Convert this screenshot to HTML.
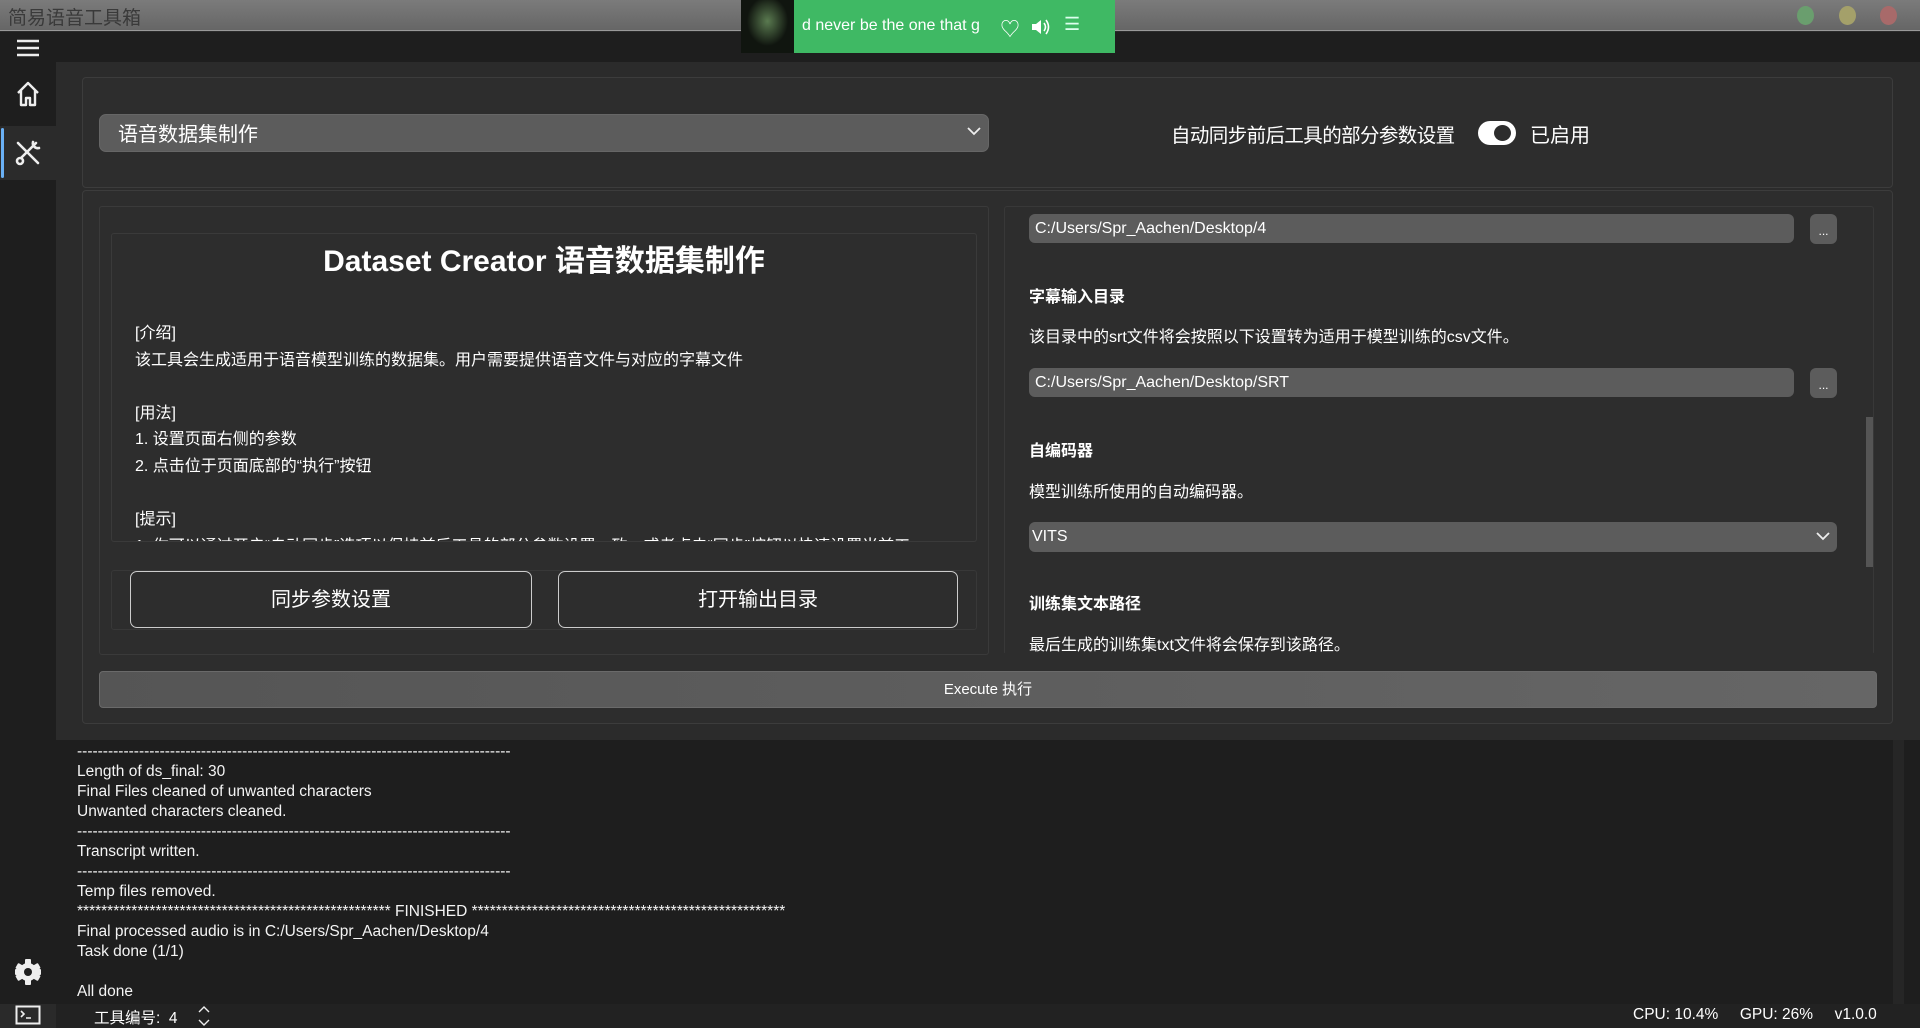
<!DOCTYPE html>
<html><head><meta charset="utf-8">
<style>
*{margin:0;padding:0;box-sizing:border-box}
body{width:1920px;height:1028px;overflow:hidden;background:#2b2b2b;font-family:"Liberation Sans","Noto Sans CJK SC",sans-serif;color:#fff;position:relative}
.a{position:absolute}
.t{white-space:nowrap}
</style></head><body>
<!-- title bar -->
<div class="a" style="left:0;top:0;width:1920px;height:31px;background:linear-gradient(#7b7b7b,#666);border-bottom:1px solid #999"></div>
<div class="a t" style="left:8px;top:3px;font-size:19px;color:#3a3a3a">简易语音工具箱</div>
<div class="a" style="left:1797px;top:6px;width:17px;height:19px;border-radius:50%;background:#6a9e6e"></div>
<div class="a" style="left:1839px;top:6px;width:17px;height:19px;border-radius:50%;background:#a4a06a"></div>
<div class="a" style="left:1880px;top:6px;width:17px;height:19px;border-radius:50%;background:#a86a6a"></div>
<!-- top dark strip + sidebar -->
<div class="a" style="left:0;top:32px;width:1920px;height:30px;background:#1e1e1e"></div>
<div class="a" style="left:0;top:32px;width:56px;height:996px;background:#1e1e1e"></div>
<!-- green player -->
<div class="a" style="left:741px;top:0;width:374px;height:53px;background:#3fb964"></div>
<div class="a" style="left:741px;top:0;width:53px;height:53px;background:radial-gradient(ellipse at 50% 40%,#5a7a50,#10150f 55%)"></div>
<div class="a t" style="left:802px;top:17px;font-size:16px;color:#fff">d never be the one that g</div>
<div class="a t" style="left:1000px;top:13px;font-size:20px;color:#fff">♡</div>
<svg class="a" style="left:1030px;top:17px" width="22" height="20"><path d="M2 7 H6 L11 3 V17 L6 13 H2 Z" fill="#fff"/><path d="M14 6 Q17 10 14 14 M16 3 Q21 10 16 17" stroke="#fff" stroke-width="1.6" fill="none"/></svg>
<div class="a t" style="left:1064px;top:14px;font-size:18px;color:#dfe">☰</div>
<svg class="a" style="left:15px;top:38px" width="26" height="20"><g stroke="#eee" stroke-width="2.4"><line x1="2" y1="3" x2="24" y2="3"/><line x1="2" y1="10" x2="24" y2="10"/><line x1="2" y1="17" x2="24" y2="17"/></g></svg>
<svg class="a" style="left:14px;top:80px" width="28" height="28"><path d="M4 13 L14 3 L24 13 M7 10 V25 H12 V18 H16 V25 H21 V10" fill="none" stroke="#eee" stroke-width="2.4" stroke-linejoin="round"/></svg>
<div class="a" style="left:0;top:126px;width:56px;height:54px;background:#2b2b2b"></div>
<div class="a" style="left:1px;top:128px;width:3px;height:50px;background:#6ab0f5;border-radius:2px"></div>
<svg class="a" style="left:14px;top:139px" width="28" height="28"><g fill="none" stroke="#eee" stroke-width="2.6" stroke-linecap="round"><path d="M4 4 L24 24"/><path d="M22 4 L7 19"/><circle cx="6" cy="22" r="3"/><path d="M19 3 a5 5 0 0 0 6 6"/></g></svg>
<svg class="a" style="left:14px;top:958px" width="28" height="28"><g fill="#eee"><circle cx="14" cy="14" r="9"/><rect x="11" y="1" width="6" height="26" rx="1"/><rect x="1" y="11" width="26" height="6" rx="1"/><rect x="11" y="1" width="6" height="26" rx="1" transform="rotate(60 14 14)"/><rect x="11" y="1" width="6" height="26" rx="1" transform="rotate(-60 14 14)"/></g><circle cx="14" cy="14" r="4" fill="#1e1e1e"/></svg>
<div class="a" style="left:0;top:1004px;width:56px;height:24px;background:#2a2a2a"></div>
<svg class="a" style="left:15px;top:1005px" width="26" height="20"><rect x="1.5" y="1.5" width="23" height="17" fill="none" stroke="#eee" stroke-width="2"/><path d="M6 6 L9 9 L6 12 M11 13 H16" stroke="#eee" stroke-width="1.6" fill="none"/></svg>
<!-- panel 1 -->
<div class="a" style="left:82px;top:77px;width:1811px;height:111px;border:1px solid #3c3c3c;border-radius:4px;background:#2d2d2d"></div>
<div class="a" style="left:99px;top:114px;width:890px;height:38px;background:#5c5c5c;border-radius:7px;border:1px solid #666"></div>
<div class="a t" style="left:118px;top:118px;font-size:20px">语音数据集制作</div>
<svg class="a" style="left:966px;top:125px" width="16" height="12"><path d="M2 3 L8 9 L14 3" stroke="#eee" stroke-width="1.8" fill="none"/></svg>
<div class="a t" style="left:1171px;top:119px;font-size:19.5px;letter-spacing:-0.6px">自动同步前后工具的部分参数设置</div>
<div class="a" style="left:1478px;top:121px;width:38px;height:24px;background:#fff;border-radius:12px"></div>
<div class="a" style="left:1494px;top:125px;width:17px;height:16px;background:#2d2d2d;border-radius:50%"></div>
<div class="a t" style="left:1530px;top:119px;font-size:20px">已启用</div>
<!-- panel 2 -->
<div class="a" style="left:82px;top:190px;width:1811px;height:534px;border:1px solid #3c3c3c;border-radius:4px;background:#2d2d2d"></div>
<div class="a" style="left:99px;top:206px;width:890px;height:449px;border:1px solid #3a3a3a;border-radius:3px"></div>
<div class="a" style="left:111px;top:233px;width:866px;height:309px;border:1px solid #3a3a3a;border-radius:3px;overflow:hidden">
 <div style="text-align:center;font-size:30px;font-weight:bold;margin-top:2px">Dataset Creator 语音数据集制作</div>
 <div style="position:absolute;left:23px;top:87px;font-size:16px;line-height:26.6px;white-space:nowrap">[介绍]<br>该工具会生成适用于语音模型训练的数据集。用户需要提供语音文件与对应的字幕文件<br><br>[用法]<br>1. 设置页面右侧的参数<br>2. 点击位于页面底部的“执行”按钮<br><br>[提示]<br>1. 你可以通过开启“自动同步”选项以保持前后工具的部分参数设置一致，或者点击“同步”按钮以快速设置当前工</div>
</div>
<div class="a" style="left:111px;top:570px;width:866px;height:60px;border:1px solid #383838;border-radius:3px"></div>
<div class="a" style="left:130px;top:571px;width:402px;height:57px;border:1.5px solid #ccc;border-radius:7px;text-align:center;line-height:56px;font-size:20px">同步参数设置</div>
<div class="a" style="left:558px;top:571px;width:400px;height:57px;border:1.5px solid #ccc;border-radius:7px;text-align:center;line-height:56px;font-size:20px">打开输出目录</div>
<!-- right -->
<div class="a" style="left:1004px;top:206px;width:870px;height:449px;border:1px solid #383838;border-radius:3px"></div>
<div class="a" style="left:1866px;top:417px;width:7px;height:150px;background:#555"></div>
<div class="a" style="left:1029px;top:214px;width:765px;height:29px;background:#5c5c5c;border-radius:6px"></div>
<div class="a t" style="left:1035px;top:220px;font-size:16px">C:/Users/Spr_Aachen/Desktop/4</div>
<div class="a" style="left:1810px;top:214px;width:27px;height:30px;background:#5c5c5c;border-radius:6px;text-align:center;font-size:12px;line-height:34px">...</div>
<div class="a t" style="left:1029px;top:283px;font-size:16px;font-weight:bold">字幕输入目录</div>
<div class="a t" style="left:1029px;top:323px;font-size:16px">该目录中的srt文件将会按照以下设置转为适用于模型训练的csv文件。</div>
<div class="a" style="left:1029px;top:368px;width:765px;height:29px;background:#5c5c5c;border-radius:6px"></div>
<div class="a t" style="left:1035px;top:374px;font-size:16px">C:/Users/Spr_Aachen/Desktop/SRT</div>
<div class="a" style="left:1810px;top:368px;width:27px;height:30px;background:#5c5c5c;border-radius:6px;text-align:center;font-size:12px;line-height:34px">...</div>
<div class="a t" style="left:1029px;top:437px;font-size:16px;font-weight:bold">自编码器</div>
<div class="a t" style="left:1029px;top:478px;font-size:16px">模型训练所使用的自动编码器。</div>
<div class="a" style="left:1029px;top:522px;width:808px;height:30px;background:#5c5c5c;border-radius:6px"></div>
<div class="a t" style="left:1032px;top:528px;font-size:16px">VITS</div>
<svg class="a" style="left:1815px;top:530px" width="16" height="12"><path d="M2 3 L8 9 L14 3" stroke="#eee" stroke-width="1.8" fill="none"/></svg>
<div class="a t" style="left:1029px;top:590px;font-size:16px;font-weight:bold">训练集文本路径</div>
<div class="a t" style="left:1029px;top:631px;font-size:16px">最后生成的训练集txt文件将会保存到该路径。</div>
<div class="a" style="left:1004px;top:653px;width:870px;height:3px;background:#2d2d2d"></div>
<!-- execute -->
<div class="a" style="left:99px;top:671px;width:1778px;height:37px;background:linear-gradient(90deg,#555,#666);border:1px solid #6a6a6a;border-radius:4px;text-align:center;line-height:36px;font-size:15px">Execute 执行</div>
<!-- console -->
<div class="a" style="left:56px;top:740px;width:1864px;height:264px;background:#1e1e1e"></div>
<div class="a" style="left:1893px;top:740px;width:11px;height:264px;background:#262626"></div>
<div class="a" style="left:77px;top:742px;font-size:15.5px;line-height:20px;white-space:pre;color:#f4f4f4">------------------------------------------------------------------------------------
Length of ds_final: 30
Final Files cleaned of unwanted characters
Unwanted characters cleaned.
------------------------------------------------------------------------------------
Transcript written.
------------------------------------------------------------------------------------
Temp files removed.
**************************************************** FINISHED ****************************************************
Final processed audio is in C:/Users/Spr_Aachen/Desktop/4
Task done (1/1)

All done</div>
<!-- status bar -->
<div class="a" style="left:56px;top:1004px;width:1864px;height:24px;background:#222"></div>
<div class="a t" style="left:94px;top:1006px;font-size:15.5px">工具编号:&nbsp;&nbsp;4</div>
<svg class="a" style="left:196px;top:1004px" width="16" height="24"><path d="M3 8 L8 3 L13 8 M3 16 L8 21 L13 16" stroke="#eee" stroke-width="1.4" fill="none"/></svg>
<div class="a t" style="left:1633px;top:1006px;font-size:15.5px">CPU: 10.4%&nbsp;&nbsp;&nbsp;&nbsp;&nbsp;GPU: 26%&nbsp;&nbsp;&nbsp;&nbsp;&nbsp;v1.0.0</div>
</body></html>
